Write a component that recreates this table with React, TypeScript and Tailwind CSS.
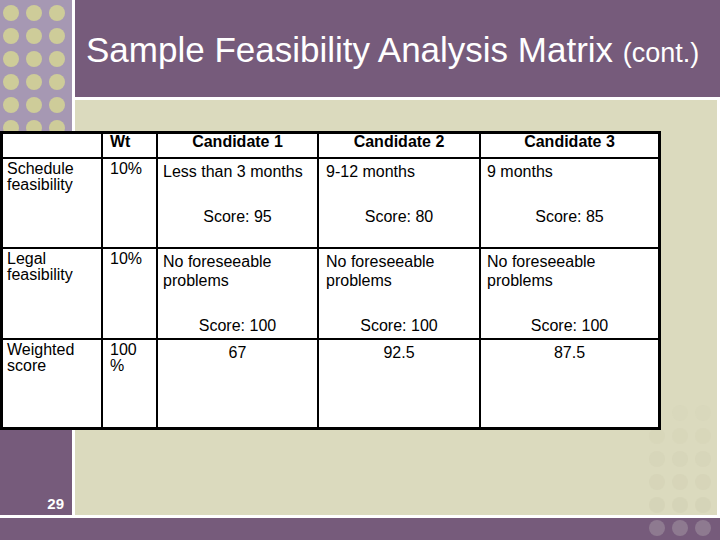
import React from "react";

type Criterion = {
  label: string[];
  wt: string[];
  notes: string[][];
  scores: string[];
};

const criteria: Criterion[] = [
  {
    label: ["Schedule", "feasibility"],
    wt: ["10%"],
    notes: [["Less than 3 months"], ["9-12 months"], ["9 months"]],
    scores: ["95", "80", "85"],
  },
  {
    label: ["Legal", "feasibility"],
    wt: ["10%"],
    notes: [
      ["No foreseeable", "problems"],
      ["No foreseeable", "problems"],
      ["No foreseeable", "problems"],
    ],
    scores: ["100", "100", "100"],
  },
];

const weighted = ["67", "92.5", "87.5"];

// left padding of the text in each candidate column
const candPad = ["pl-[5px]", "pl-[7px]", "pl-[6px]"];

function Lines({ lines }: { lines: string[] }) {
  return (
    <>
      {lines.map((l, i) => (
        <div key={i}>{l}</div>
      ))}
    </>
  );
}

function Dot({ className }: { className: string }) {
  return <div className={`w-4 h-4 rounded-full ${className}`} />;
}

// ==========================================
// TABLE
// ==========================================
function Matrix() {
  return (
    <div className="absolute left-0 top-[131px] grid grid-cols-[98px_53px_159px_160px_177px] grid-rows-[23px_88px_89px_87px] gap-[2px] bg-black border-[3px] border-black text-[16px] text-black">
      {/* header */}
      <div className="bg-white" />
      <div className="bg-white pl-[7px] font-bold leading-4">Wt</div>
      {["Candidate 1", "Candidate 2", "Candidate 3"].map((c) => (
        <div key={c} className="bg-white text-center font-bold leading-4">
          {c}
        </div>
      ))}

      {/* criteria rows */}
      {criteria.map((row) => (
        <React.Fragment key={row.label.join(" ")}>
          <div className="bg-white pl-[4px] pt-[2px] leading-4">
            <Lines lines={row.label} />
          </div>
          <div className="bg-white pl-[7px] pt-[2px] leading-4">
            <Lines lines={row.wt} />
          </div>
          {row.notes.map((n, i) => (
            <div key={i} className="bg-white pt-[3px] leading-[19px]">
              <div className={candPad[i]}>
                <Lines lines={n} />
              </div>
              <div className="mt-[26px] text-center">Score: {row.scores[i]}</div>
            </div>
          ))}
        </React.Fragment>
      ))}

      {/* weighted score */}
      <div className="bg-white pl-[4px] pt-[2px] leading-4">
        <Lines lines={["Weighted", "score"]} />
      </div>
      <div className="bg-white pl-[7px] pt-[2px] leading-4">
        <Lines lines={["100", "%"]} />
      </div>
      {weighted.map((w, i) => (
        <div key={i} className="bg-white pt-[3px] leading-[19px] text-center">
          {w}
        </div>
      ))}
    </div>
  );
}

export default function App() {
  // faint dots fading in towards the bottom right corner
  const beigeRows = [0.2, 0.35, 0.5, 0.6, 0.7];

  return (
    <div className="relative w-[720px] h-[540px] overflow-hidden bg-white font-['Liberation_Sans',Arial,sans-serif]">
      <div className="flex h-[515px]">
        {/* SIDEBAR */}
        <aside className="w-[72px] flex flex-col bg-[#765b7b]">
          <div className="h-[215px] bg-[#a698b3] pl-[3px] pt-[5px] grid grid-cols-[16px_16px_16px] auto-rows-[16px] gap-[7px] overflow-hidden">
            {Array.from({ length: 27 }).map((_, i) => (
              <Dot key={i} className="bg-[#cecc99]" />
            ))}
          </div>
          <div className="flex-1 flex items-end justify-end pr-[8px] pb-[4px]">
            <span className="text-[15px] font-bold leading-none text-white">29</span>
          </div>
        </aside>

        {/* MAIN */}
        <main className="ml-[3px] flex-1 flex flex-col">
          <header className="h-[97px] bg-[#765b7b] pl-[11px] pt-[32px] leading-none text-white text-[35px] whitespace-nowrap">
            Sample Feasibility Analysis Matrix <span className="text-[27px]">(cont.)</span>
          </header>
          <section className="mt-[3px] mr-[3px] flex-1 bg-[#dbdabe] flex flex-col justify-end items-end pr-[6px] pb-[2px]">
            <div className="grid grid-cols-[16px_16px_16px] gap-[7px]">
              {beigeRows.map((o, r) =>
                [0, 1, 2].map((c) => (
                  <div
                    key={`${r}-${c}`}
                    className="w-4 h-4 rounded-full bg-[#d3d2b5]"
                    style={{ opacity: r === 0 && c === 0 ? 0 : o }}
                  />
                ))
              )}
            </div>
          </section>
        </main>
      </div>

      {/* FOOTER BAR */}
      <footer className="mt-[3px] h-[22px] bg-[#765b7b] flex justify-end pr-[9px] pt-[2px] gap-[7px]">
        <Dot className="bg-[#8e7a90]" />
        <Dot className="bg-[#8e7a90]" />
        <Dot className="bg-[#8e7a90]" />
      </footer>

      <Matrix />
    </div>
  );
}
